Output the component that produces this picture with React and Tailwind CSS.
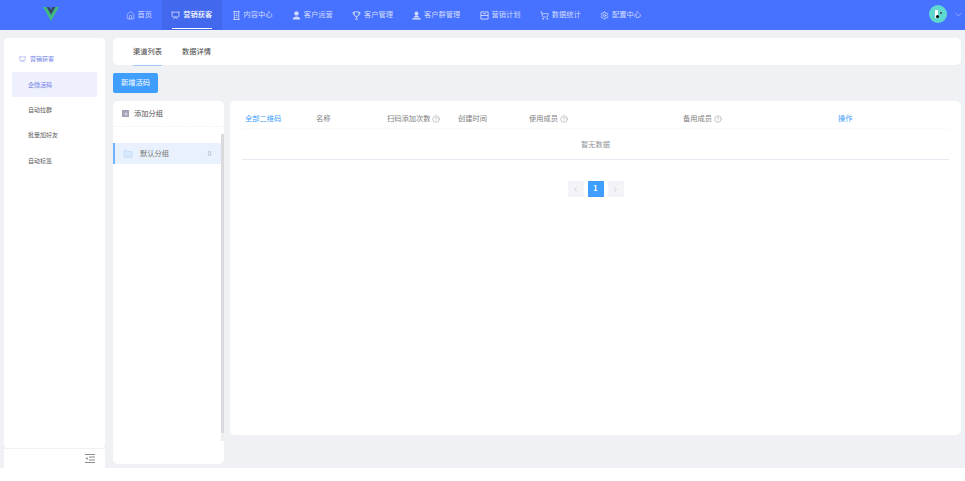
import React from 'react'
import { House, Presentation, Settings, ShoppingCart, ChevronDown, ChevronLeft, ChevronRight, CircleHelp, Plus, Folder } from 'lucide-react'

function IconContent(props) {
  return (
    <svg width="9" height="10" viewBox="0 0 9 10" fill="none" stroke="currentColor" strokeWidth="0.8" {...props}>
      <path d="M1 .5h7M1 9.5h7M2 .5v9M7 .5v9M3.5 3h2M3.5 5h2M3.5 7h2" />
    </svg>
  )
}

function IconPerson(props) {
  return (
    <svg width="9" height="9" viewBox="0 0 9 9" fill="currentColor" {...props}>
      <circle cx="4.5" cy="2.4" r="2.2" />
      <path d="M.8 8.6c0-2 1.6-3 3.7-3s3.7 1 3.7 3z" />
    </svg>
  )
}

function IconCup(props) {
  return (
    <svg width="9" height="10" viewBox="0 0 9 10" fill="none" stroke="currentColor" strokeWidth="0.8" {...props}>
      <path d="M1.8 1h5.4v2.4a2.7 2.7 0 0 1-5.4 0z" />
      <path d="M1.8 1.8H.5c0 1.3.5 1.9 1.4 2.1M7.2 1.8h1.3c0 1.3-.5 1.9-1.4 2.1M4.5 6.2v2.2M2.8 9h3.4" />
    </svg>
  )
}

function IconGroup(props) {
  return (
    <svg width="10" height="9" viewBox="0 0 10 9" fill="currentColor" {...props}>
      <circle cx="5" cy="2.2" r="2.1" />
      <path d="M2.2 6.6c0-1.4 1.2-2 2.8-2s2.8.6 2.8 2z" />
      <path d="M.5 7.4h9V9h-9z" />
    </svg>
  )
}

function IconPlan(props) {
  return (
    <svg width="9" height="10" viewBox="0 0 9 10" fill="none" stroke="currentColor" strokeWidth="0.8" {...props}>
      <path d="M.5 1h8v8h-8zM.5 5h8M3 3h3" />
    </svg>
  )
}

function IconCollapse(props) {
  return (
    <svg width="10" height="9" viewBox="0 0 10 9" fill="none" stroke="currentColor" strokeWidth="1" {...props}>
      <path d="M0 .5h10M4 3h6M4 6h6M0 8.5h10" />
      <path d="M2.6 3v3L.4 4.5z" fill="currentColor" stroke="none" />
    </svg>
  )
}

const navItems = [
  { label: '首页', icon: House },
  { label: '营销获客', icon: Presentation, active: true },
  { label: '内容中心', icon: IconContent },
  { label: '客户运营', icon: IconPerson },
  { label: '客户管理', icon: IconCup },
  { label: '客户群管理', icon: IconGroup },
  { label: '营销计划', icon: IconPlan },
  { label: '数据统计', icon: ShoppingCart },
  { label: '配置中心', icon: Settings },
]

const sideItems = ['企微活码', '自动拉群', '批量加好友', '自动标签']

const columns = [
  { label: '全部二维码', blue: true },
  { label: '名称' },
  { label: '扫码添加次数', help: true },
  { label: '创建时间' },
  { label: '使用成员', help: true },
  { label: '备用成员', help: true },
  { label: '操作', blue: true },
]

function Logo() {
  return (
    <svg width="16" height="14" viewBox="0 0 16 14">
      <path d="M0 0h3.6L8 7.6 12.4 0H16L8 14z" fill="#42b883" />
      <path d="M3.6 0h2.8L8 2.8 9.6 0h2.8L8 7.6z" fill="#35495e" />
    </svg>
  )
}

function Avatar() {
  return (
    <div className="relative w-[18px] h-[18px] rounded-full bg-[#5fd8d0] overflow-hidden">
      <div className="absolute left-[6px] top-[5px] w-[3px] h-[8px] bg-white" />
      <div className="absolute left-[7px] top-[10px] w-[3px] h-[3px] rounded-full bg-black" />
      <div className="absolute left-[11px] top-[7px] w-[2px] h-[2px] bg-[#3f6f6c]" />
    </div>
  )
}

function Header() {
  return (
    <header className="h-[30px] shrink-0 flex items-center bg-[#4771ff]">
      <div className="w-[116px] shrink-0 flex justify-start pl-[43px] pb-[2px]">
        <Logo />
      </div>
      <nav className="flex h-full">
        {navItems.map(({ label, icon: Icon, active }) => (
          <div key={label} className={`relative flex items-center gap-[3px] px-[9.6px] h-full ${active ? 'bg-[#4268ee] text-white font-medium' : 'text-white/75'}`}>
            <Icon width={9} height={9} strokeWidth={active || Icon === House ? 1.6 : undefined} className="shrink-0" />
            <span className="text-[7.25px] leading-none whitespace-nowrap">{label}</span>
            {active && <div className="absolute left-[10px] right-[10px] bottom-[1px] h-px bg-white" />}
          </div>
        ))}
      </nav>
      <div className="ml-auto flex items-center gap-[6px] pr-[1px] pb-[2px]">
        <Avatar />
        <ChevronDown size={11} strokeWidth={1} className="text-white/80" />
      </div>
    </header>
  )
}

function Sidebar() {
  return (
    <aside className="w-[101px] ml-[4px] shrink-0 flex flex-col gap-px">
      <div className="flex-1 bg-white rounded-[4px] px-[8px]">
        <div className="h-[34px] pt-[8px] flex items-center gap-[4px] pl-[7px] text-[#6e7ce6]">
          <Presentation size={7} strokeWidth={1.4} />
          <span className="text-[6px] leading-none">营销获客</span>
        </div>
        {sideItems.map((item, i) => (
          <div key={item} className={`h-[25.4px] flex items-center pl-[16px] text-[6px] leading-none ${i === 0 ? 'bg-[#eef0fd] text-[#6e7ce6]' : 'text-[#5a5a5a]'}`}>
            {item}
          </div>
        ))}
      </div>
      <div className="h-[19px] shrink-0 bg-white flex items-center justify-end pr-[10px]">
        <IconCollapse className="text-[#8c8c8c]" />
      </div>
    </aside>
  )
}

function GroupPanel() {
  return (
    <div className="relative w-[111px] h-[363px] shrink-0 bg-white rounded-[5px]">
      <div className="h-[26px] flex items-center gap-[5px] pl-[9px] border-b border-dashed border-[#f4f4f6]">
        <div className="w-[7px] h-[7px] bg-[#a5a0b5] flex items-center justify-center">
          <Plus size={6} strokeWidth={2} className="text-white" />
        </div>
        <span className="text-[7.25px] leading-none text-[#555555]">添加分组</span>
      </div>
      <div className="mt-[16px] h-[21px] flex items-center bg-[#e8f1fd] border-l-2 border-[#6db3ff] pl-[8px] pr-[10px] mr-[3px]">
        <Folder size={10} strokeWidth={1} className="text-[#a8cdf5] fill-[#d6e8fb]" />
        <span className="ml-[7px] text-[7.25px] leading-none text-[#777777]">默认分组</span>
        <span className="ml-auto text-[6px] leading-none text-[#a0a8b4]">0</span>
      </div>
      {/* scrollbar: thumb plus the lighter end of its track */}
      <div className="absolute right-0 top-[33px] w-[3px] h-[307px] bg-[#eeeef1]">
        <div className="w-full h-[299px] bg-[#d9d9de]" />
      </div>
    </div>
  )
}

function QrTable() {
  return (
    <div className="flex-1 h-[334px] bg-white rounded-[5px] px-[12px]">
      <div className="grid grid-cols-[71px_71px_71px_71px_154px_155px_1fr] h-[28px] pt-[9px] items-center pl-[3px] border-b border-[#fafafb]">
        {columns.map(({ label, blue, help }) => (
          <div key={label} className={`flex items-center gap-[1.5px] text-[7.25px] leading-none whitespace-nowrap ${blue ? 'text-[#409eff]' : 'text-[#808080]'}`}>
            {label}
            {help && <CircleHelp size={8} strokeWidth={1.2} className="text-[#808080]" />}
          </div>
        ))}
      </div>
      <div className="h-[31px] pt-px flex items-center justify-center border-b border-[#e8e9f2] text-[7.25px] leading-none text-[#909399]">
        暂无数据
      </div>
      <div className="mt-[21px] flex justify-center gap-[4px]">
        <div className="w-[16px] h-[16px] flex items-center justify-center bg-[#f4f4f8] text-[#b0b3bc]">
          <ChevronLeft size={7} />
        </div>
        <div className="w-[16px] h-[16px] flex items-center justify-center bg-[#409eff] text-white text-[7.25px] font-bold leading-none">1</div>
        <div className="w-[16px] h-[16px] flex items-center justify-center bg-[#f4f4f8] text-[#b0b3bc]">
          <ChevronRight size={7} />
        </div>
      </div>
    </div>
  )
}

export default function App() {
  return (
    <div className="h-[481px] w-[965px] overflow-hidden bg-white font-['Noto_Sans_CJK_SC','Noto_Sans',sans-serif]">
      <Header />
      <main className="h-[438px] bg-[#f0f1f5] flex pt-[8px] gap-[8px]">
        <Sidebar />
        <div className="flex-1 pr-[4px] flex flex-col">
          <div className="h-[27px] bg-white rounded-[5px] flex pl-[20px] gap-[20px] text-[7.25px] leading-none text-[#444444]">
            <div className="relative flex items-center">
              渠道列表
              <div className="absolute left-0 right-0 bottom-[-1px] h-px bg-[#9fc6f5]" />
            </div>
            <div className="flex items-center">数据详情</div>
          </div>
          <button className="mt-[8px] w-[45px] h-[20px] bg-[#409eff] rounded-[2px] text-white text-[7.25px] leading-none">新增活码</button>
          <div className="mt-[8px] flex gap-[6px] items-start">
            <GroupPanel />
            <QrTable />
          </div>
        </div>
      </main>
    </div>
  )
}
